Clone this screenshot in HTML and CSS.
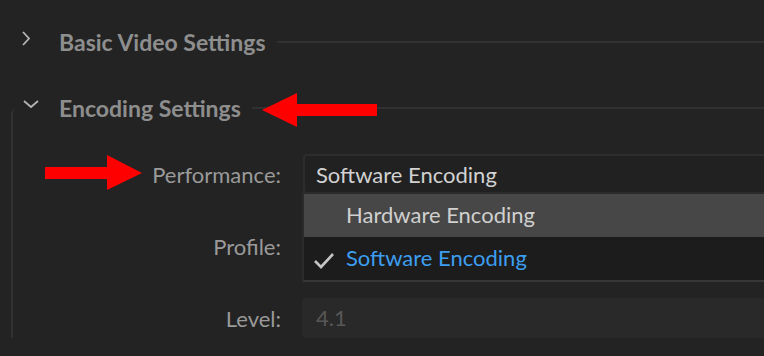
FILE: index.html
```html
<!DOCTYPE html>
<html lang="en">

<head>
    <meta charset="UTF-8" />
    <meta name="viewport" content="width=device-width, initial-scale=1.0" />
    <title>Encoding Settings</title>
    <link rel="stylesheet" href="styles.css">
</head>

<body>
    <div class="panel">
        <div class="header">
            <span class="chevron">
                <svg width="20" height="20" viewBox="0 0 20 20"><path d="M6 3 L12 9.5 L6 16" fill="none" stroke="#b5b5b5" stroke-width="1.8"/></svg>
            </span>
            <span class="title">Basic Video Settings</span>
            <span class="rule"></span>
        </div>

        <div class="header open">
            <span class="chevron">
                <svg width="20" height="20" viewBox="0 0 20 20"><path d="M3 7 L10 13 L17 7" fill="none" stroke="#b5b5b5" stroke-width="1.8"/></svg>
            </span>
            <span class="title">Encoding Settings</span>
            <span class="rule"></span>
        </div>

        <div class="group">
            <div class="row">
                <label>Performance:</label>
                <div class="control">
                    <div class="select">Software Encoding</div>
                    <ul class="menu">
                        <li class="hover">Hardware Encoding</li>
                        <li class="checked">
                            <svg class="check" width="22" height="18" viewBox="0 0 22 18"><path d="M2 9 L8 15 L20 2" fill="none" stroke="#c4c4c4" stroke-width="2.6"/></svg>
                            Software Encoding
                        </li>
                    </ul>
                </div>
            </div>
            <div class="row">
                <label>Profile:</label>
                <div class="control">
                    <div class="select"></div>
                </div>
            </div>
            <div class="row">
                <label>Level:</label>
                <div class="control">
                    <div class="field disabled">4.1</div>
                </div>
            </div>
        </div>
    </div>

    <svg class="marks" width="764" height="356" viewBox="0 0 764 356">
        <polygon points="262,110 297,93 297,104 377,104 377,116 297,116 297,127" fill="#ff0000"/>
        <polygon points="45,167 107,167 107,155 142,173 107,190 107,179 45,179" fill="#ff0000"/>
    </svg>
</body>

</html>
```

FILE: styles.css
```css
* {
    margin: 0;
    padding: 0;
    box-sizing: border-box;
}

body {
    width: 764px;
    height: 356px;
    overflow: hidden;
    position: relative;
    background-color: #232323;
    font-family: Lato, "Open Sans", sans-serif;
}

.panel {
    padding-top: 22px;
}

.header {
    display: flex;
    align-items: center;
    height: 40px;
}

.header.open {
    margin-top: 26px;
    margin-bottom: -20px;
}

.chevron {
    width: 59px;
    padding-left: 17px;
    display: flex;
    align-items: center;
}

.header .chevron svg {
    margin-top: -6px;
}

.header.open .chevron svg {
    margin-top: -8px;
    margin-left: 4px;
}

.title {
    font-size: 23px;
    font-weight: bold;
    color: #8e8e8e;
    white-space: nowrap;
}

.rule {
    flex: 1;
    height: 2px;
    margin-left: 11px;
    background-color: #313131;
}

.group {
    margin-left: 11px;
    border-left: 2px solid #313131;
    border-top-left-radius: 6px;
    padding-top: 46px;
    display: flex;
    flex-direction: column;
    gap: 32px;
}

.row {
    display: grid;
    grid-template-columns: 268px 1fr;
    column-gap: 21px;
    height: 40px;
    align-items: center;
}

.row label {
    text-align: right;
    font-size: 22px;
    color: #9a9a9a;
}

.control {
    position: relative;
    height: 40px;
}

.select,
.field {
    height: 40px;
    padding-left: 11px;
    line-height: 37px;
    font-size: 22px;
    border-radius: 4px 0 0 4px;
}

.select {
    margin-left: 1px;
    color: #d2d2d2;
    background-color: #212121;
    border: 2px solid #2d2d2d;
    border-right: 0;
}

.field.disabled {
    color: #575757;
    background-color: #292929;
    line-height: 40px;
    padding-left: 14px;
}

.menu {
    position: absolute;
    top: 38px;
    left: 0;
    right: 0;
    list-style: none;
    background-color: #1c1c1c;
    border: 2px solid #2b2b2b;
    border-bottom-color: #373737;
    border-right: 0;
    z-index: 2;
}

.menu li {
    position: relative;
    height: 43px;
    line-height: 42px;
    padding-left: 42px;
    font-size: 22px;
    white-space: nowrap;
}

.menu li.hover {
    background-color: #474747;
    color: #d0d0d0;
}

.menu li.checked {
    color: #3c9ef0;
}

.check {
    position: absolute;
    left: 9px;
    top: 15px;
}

.marks {
    position: absolute;
    left: 0;
    top: 0;
    pointer-events: none;
    z-index: 5;
}
```
